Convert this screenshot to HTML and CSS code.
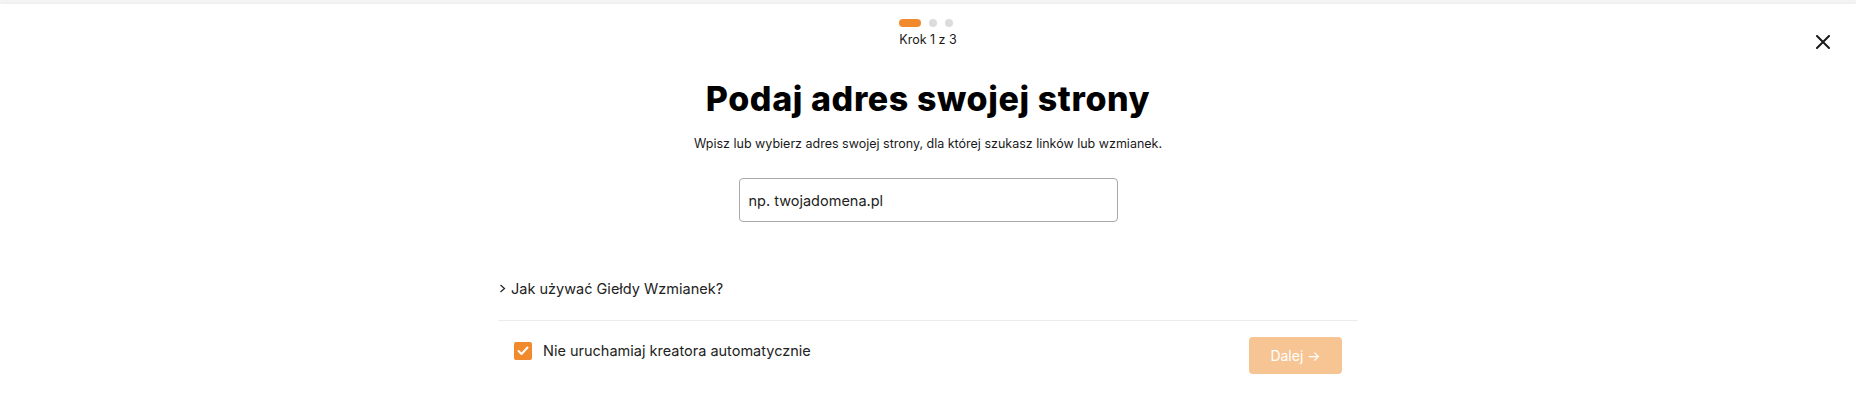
FILE: index.html
```html
<!DOCTYPE html>
<html lang="pl">
<head>
  <meta charset="UTF-8">
  <meta name="viewport" content="width=device-width, initial-scale=1.0">
  <title>Giełda Wzmianek - kreator</title>
  <link rel="stylesheet" href="styles.css">
</head>
<body>
  <div class="modal">
    <button class="close-btn" aria-label="Zamknij">
      <svg width="14" height="14" viewBox="0 0 14 14">
        <path d="M1 1 L13 13 M13 1 L1 13" stroke="#1a1a1a" stroke-width="2" stroke-linecap="round"/>
      </svg>
    </button>

    <div class="steps">
      <span class="step active"></span>
      <span class="step"></span>
      <span class="step"></span>
    </div>
    <div class="step-label">Krok 1 z 3</div>

    <h1 class="title">Podaj adres swojej strony</h1>
    <p class="subtitle">Wpisz lub wybierz adres swojej strony, dla której szukasz linków lub wzmianek.</p>

    <div class="input-wrap">
      <input type="text" class="url-input" placeholder="np. twojadomena.pl">
    </div>

    <div class="content">
      <button class="faq-toggle">
        <svg width="7" height="9" viewBox="0 0 7 9">
          <path d="M1.5 1 L5.5 4.5 L1.5 8" fill="none" stroke="#222" stroke-width="1.2"/>
        </svg>
        Jak używać Giełdy Wzmianek?
      </button>

      <div class="footer">
        <label class="check">
          <span class="check-box">
            <svg width="12" height="10" viewBox="0 0 12 10">
              <path d="M1.5 5 L4.5 8 L10.5 1.5" fill="none" stroke="#fff" stroke-width="2" stroke-linecap="round" stroke-linejoin="round"/>
            </svg>
          </span>
          Nie uruchamiaj kreatora automatycznie
        </label>
        <button class="next-btn" disabled>Dalej &#8594;</button>
      </div>
    </div>
  </div>
</body>
</html>
```

FILE: styles.css
```css
body {
  font-family: "Inter", "Open Sans", sans-serif;
  background-color: #f6f6f6;
  margin: 0;
  padding: 4px 0 0 0;
  overflow: hidden;
  color: #222;
}

.modal {
  position: relative;
  background-color: #fff;
  min-height: 400px;
  padding-top: 15px;
  box-shadow: 0 -1px 5px rgba(0, 0, 0, 0.05);
}

.close-btn {
  position: absolute;
  top: 31px;
  right: 26px;
  padding: 0;
  border: none;
  background: none;
  cursor: pointer;
  line-height: 0;
}

.steps {
  display: flex;
  justify-content: center;
  gap: 8px;
  margin-left: -4px;
}

.step {
  width: 8px;
  height: 8px;
  border-radius: 4px;
  background-color: #dcdcdc;
}

.step.active {
  width: 22px;
  background-color: #f08a2c;
}

.step-label {
  text-align: center;
  font-size: 12.5px;
  line-height: 16px;
  margin-top: 5px;
  color: #1a1a1a;
}

.title {
  text-align: center;
  font-size: 34px;
  font-weight: 800;
  line-height: 42px;
  letter-spacing: 0.6px;
  color: #000;
  margin: 30px 0 0;
}

.subtitle {
  text-align: center;
  font-size: 12.5px;
  line-height: 18px;
  margin: 15px 0 0;
  color: #1a1a1a;
}

.input-wrap {
  display: flex;
  justify-content: center;
  margin-top: 25px;
}

.url-input {
  width: 379px;
  height: 44px;
  box-sizing: border-box;
  padding: 0 9px;
  border: 1px solid #a8a8a8;
  border-radius: 4px;
  font-family: inherit;
  font-size: 14.5px;
}

.url-input::placeholder {
  color: #222;
}

.content {
  width: 860px;
  margin: 0 auto;
}

.faq-toggle {
  display: flex;
  align-items: center;
  gap: 5px;
  margin-top: 58px;
  padding: 0 0 0 1px;
  border: none;
  background: none;
  font-family: inherit;
  font-size: 14.5px;
  color: #222;
  cursor: pointer;
}

.footer {
  display: flex;
  justify-content: space-between;
  align-items: flex-start;
  margin-top: 23px;
  border-top: 1px solid #ececec;
  padding: 16px 26px 0 16px;
}

.check {
  display: flex;
  align-items: center;
  gap: 11px;
  margin-top: 4px;
  font-size: 14.5px;
  line-height: 20px;
  color: #222;
  cursor: pointer;
}

.check-box {
  display: flex;
  align-items: center;
  justify-content: center;
  width: 18px;
  height: 18px;
  border-radius: 2px;
  background-color: #f08a2c;
}

.next-btn {
  width: 93px;
  height: 37px;
  margin-right: -10px;
  border: none;
  border-radius: 4px;
  background-color: #f6c593;
  color: #fff;
  font-family: inherit;
  font-size: 14px;
}
```
